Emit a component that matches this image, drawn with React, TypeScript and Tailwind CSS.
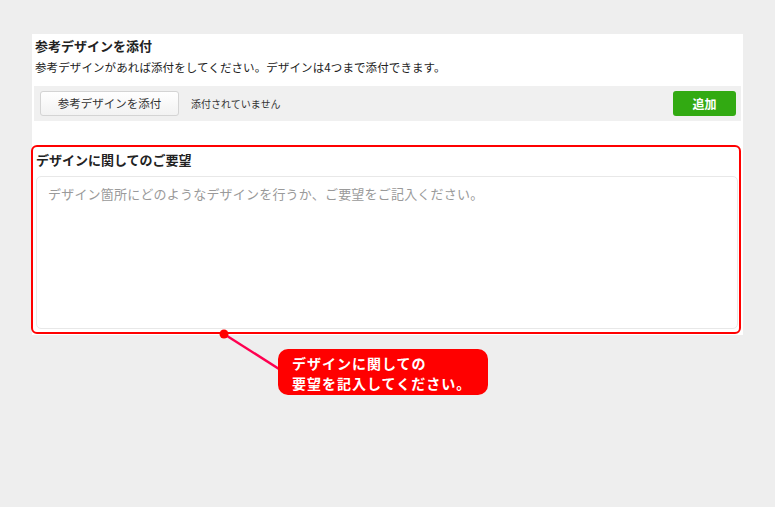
// 参考デザイン添付フォーム + 注釈
export default function App() {
  return (
    <div className="relative min-h-[507px] bg-[#eeeeee] pt-[34px] pl-[32px] font-['Noto_Sans_CJK_JP',sans-serif] text-[#222]">
      {/* 白いパネル */}
      <div className="w-[711px] bg-white px-[2px] pt-[3px] pb-px">
        {/* 参考デザインを添付 */}
        <h2 className="pl-px text-[13px] font-bold leading-[18px]">参考デザインを添付</h2>
        <p className="mt-[4px] pl-px text-[11.5px] leading-[16px] tracking-[0.1px]">
          参考デザインがあれば添付をしてください。デザインは4つまで添付できます。
        </p>
        <div className="mt-[11px] flex h-[35px] items-center bg-[#f0f0f0] pl-[6px] pr-[5px]">
          <button className="h-[25px] w-[139px] rounded-[3px] border border-[#d4d4d4] bg-gradient-to-b from-white to-[#f2f2f2] text-[11.5px] leading-none text-[#333]">
            参考デザインを添付
          </button>
          <span className="ml-[12px] text-[10px] leading-none text-[#333]">添付されていません</span>
          <button className="ml-auto h-[25px] w-[63px] rounded-[3px] bg-[#32aa12] text-[12px] font-bold leading-none text-white">
            追加
          </button>
        </div>

        {/* デザインに関してのご要望 */}
        <div className="mt-[24px] -ml-[3px] w-[710px] rounded-[6px] border-2 border-[#ff0000] pt-[4px] pl-[3px] pr-[1px] pb-[3px]">
          <h2 className="text-[13px] font-bold leading-[18px]">デザインに関してのご要望</h2>
          <div className="mt-[7px] h-[153px] rounded-[5px] border border-[#e8e8e8] pl-[11px] pt-[8px] text-[13px] leading-[18px] tracking-[0.2px] text-[#9a9a9a]">
            デザイン箇所にどのようなデザインを行うか、ご要望をご記入ください。
          </div>
        </div>
      </div>

      {/* 引き出し線 */}
      <svg className="absolute left-0 top-0" width="775" height="507">
        <line x1="224" y1="334" x2="290" y2="376" stroke="#ff0050" strokeWidth="2.5" />
        <circle cx="224" cy="334" r="4.5" fill="#ff0000" />
      </svg>

      {/* 吹き出し */}
      <div className="absolute left-[278px] top-[349px] w-[210px] rounded-[10px] bg-[#ff0000] pl-[14px] pt-[4px] pb-[2px] text-[14px] font-bold leading-[20px] tracking-[1px] text-white">
        デザインに関しての
        <br />
        要望を記入してください。
      </div>
    </div>
  );
}
